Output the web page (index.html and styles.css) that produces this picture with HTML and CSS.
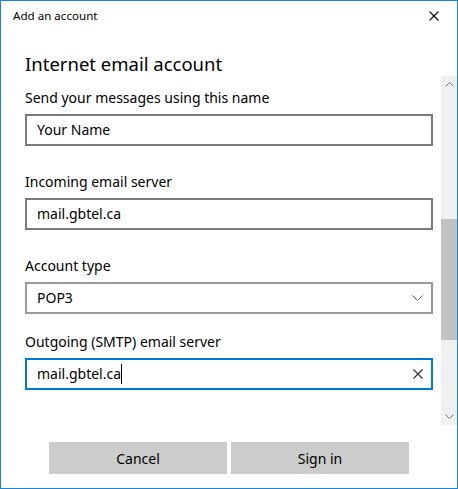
FILE: index.html
```html
<!DOCTYPE html>
<html>
<head>
<meta charset="utf-8">
<link rel="stylesheet" href="styles.css">
</head>
<body>
<div class="window">
  <div class="titlebar">
    <span class="title">Add an account</span>
    <div class="close">
      <svg width="10" height="10" viewBox="0 0 10 10"><path d="M0.5 0.5 L9.5 9.5 M9.5 0.5 L0.5 9.5" stroke="#000" stroke-width="1.1" fill="none"/></svg>
    </div>
  </div>
  <h1 class="heading">Internet email account</h1>
  <div class="body">
    <div class="content">
      <div class="field">
        <div class="label">Send your messages using this name</div>
        <div class="input"><span class="value">Your Name</span></div>
      </div>
      <div class="field">
        <div class="label">Incoming email server</div>
        <div class="input"><span class="value">mail.gbtel.ca</span></div>
      </div>
      <div class="field field-select">
        <div class="label">Account type</div>
        <div class="input select"><span class="value">POP3</span>
          <svg class="chev" width="11" height="6" viewBox="0 0 11 6"><path d="M0.5 0.5 L5.5 5.5 L10.5 0.5" stroke="#666" stroke-width="1" fill="none"/></svg>
        </div>
      </div>
      <div class="field">
        <div class="label">Outgoing (SMTP) email server</div>
        <div class="input focused"><span class="value">mail.gbtel.ca</span><span class="caret"></span>
          <svg class="clear" width="10" height="10" viewBox="0 0 10 10"><path d="M0.5 0.5 L9.5 9.5 M9.5 0.5 L0.5 9.5" stroke="#333" stroke-width="1.2" fill="none"/></svg>
        </div>
      </div>
    </div>
    <div class="scrollbar">
      <div class="arrow">
        <svg width="9" height="5" viewBox="0 0 9 5"><path d="M0.5 4.5 L4.5 0.5 L8.5 4.5" stroke="#777" stroke-width="1" fill="none"/></svg>
      </div>
      <div class="track">
        <div class="thumb"></div>
      </div>
      <div class="arrow">
        <svg width="9" height="5" viewBox="0 0 9 5"><path d="M0.5 0.5 L4.5 4.5 L8.5 0.5" stroke="#777" stroke-width="1" fill="none"/></svg>
      </div>
    </div>
  </div>
  <div class="footer">
    <button class="btn">Cancel</button>
    <button class="btn">Sign in</button>
  </div>
</div>
</body>
</html>
```

FILE: styles.css
```css
html, body {
  margin: 0;
  padding: 0;
  background: #fff;
}
body {
  font-family: "Noto Sans", "Open Sans", sans-serif;
  color: #000;
}
.window {
  width: 458px;
  height: 489px;
  box-sizing: border-box;
  border: 1px solid #1883d7;
  display: flex;
  flex-direction: column;
  background: #fff;
}
.titlebar {
  height: 30px;
  display: flex;
  align-items: center;
  justify-content: space-between;
  flex: none;
}
.title {
  font-size: 11.6px;
  padding-left: 12px;
  line-height: 16px;
}
.close {
  width: 46px;
  height: 30px;
  display: flex;
  align-items: center;
  justify-content: center;
}
.heading {
  margin: 20px 0 0 24px;
  font-size: 18.5px;
  font-weight: normal;
  line-height: 25px;
  height: 25px;
  flex: none;
}
.body {
  height: 349px;
  display: flex;
  flex: none;
}
.content {
  flex: 1;
  padding: 12px 0 0 24px;
}
.field {
  margin-bottom: 26px;
}
.field-select {
  margin-bottom: 18px;
}
.label {
  font-size: 14px;
  line-height: 20px;
  margin-bottom: 6px;
}
.input {
  width: 408px;
  height: 32px;
  box-sizing: border-box;
  border: 2px solid #7a7a7a;
  display: flex;
  align-items: center;
  padding: 0 8px 0 10px;
  font-size: 14px;
}
.value {
  line-height: 20px;
}
.select {
  border-color: #999;
}
.focused {
  border-color: #0078d7;
}
.caret {
  width: 1px;
  height: 20px;
  background: #000;
}
.chev, .clear {
  margin-left: auto;
}
.scrollbar {
  width: 16px;
  background: #f0f0f0;
  display: flex;
  flex-direction: column;
}
.arrow {
  height: 17px;
  display: flex;
  align-items: center;
  justify-content: center;
  flex: none;
}
.track {
  flex: 1;
  padding-top: 126px;
}
.thumb {
  height: 121px;
  background: #c2c2c2;
}
.footer {
  flex: 1;
  display: flex;
  justify-content: center;
  gap: 4px;
  padding-top: 17px;
}
.btn {
  width: 178px;
  height: 32px;
  border: none;
  background: #cccccc;
  font-family: "Noto Sans", "Open Sans", sans-serif;
  font-size: 14px;
  color: #000;
  padding: 0;
}
```
